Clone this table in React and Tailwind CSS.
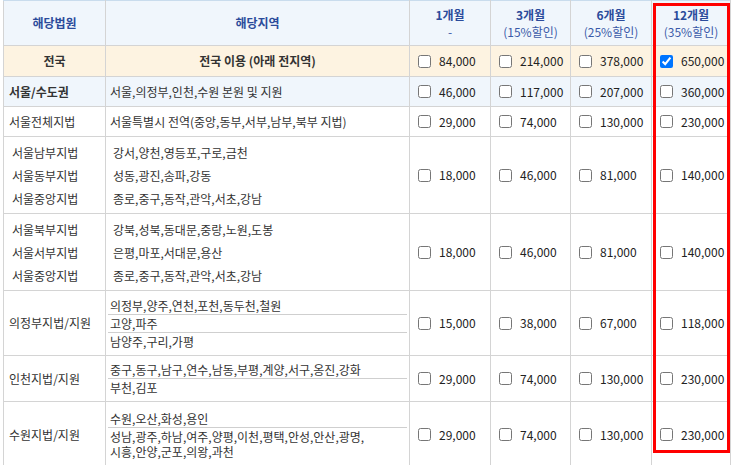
import React from "react";

const font = "font-['Noto_Sans_CJK_KR','Noto_Sans',sans-serif]";

const headers = [
  { top: "1개월", sub: "-" },
  { top: "3개월", sub: "(15%할인)" },
  { top: "6개월", sub: "(25%할인)" },
  { top: "12개월", sub: "(35%할인)" },
];

const rows = [
  {
    courts: ["전국"],
    regions: ["전국 이용 (아래 전지역)"],
    prices: ["84,000", "214,000", "378,000", "650,000"],
    bg: "bg-[#fdf3e1]",
    kind: "nation",
    h: "h-[31px]",
  },
  {
    courts: ["서울/수도권"],
    regions: ["서울,의정부,인천,수원 본원 및 지원"],
    prices: ["46,000", "117,000", "207,000", "360,000"],
    bg: "bg-[#f0f6fc]",
    kind: "bold",
    h: "h-[30px]",
  },
  {
    courts: ["서울전체지법"],
    regions: ["서울특별시 전역(중앙,동부,서부,남부,북부 지법)"],
    prices: ["29,000", "74,000", "130,000", "230,000"],
    h: "h-[30px]",
  },
  {
    courts: ["서울남부지법", "서울동부지법", "서울중앙지법"],
    regions: ["강서,양천,영등포,구로,금천", "성동,광진,송파,강동", "종로,중구,동작,관악,서초,강남"],
    prices: ["18,000", "46,000", "81,000", "140,000"],
    kind: "group",
    h: "h-[77px]",
  },
  {
    courts: ["서울북부지법", "서울서부지법", "서울중앙지법"],
    regions: ["강북,성북,동대문,중랑,노원,도봉", "은평,마포,서대문,용산", "종로,중구,동작,관악,서초,강남"],
    prices: ["18,000", "46,000", "81,000", "140,000"],
    kind: "group",
    h: "h-[77px]",
  },
  {
    courts: ["의정부지법/지원"],
    regions: ["의정부,양주,연천,포천,동두천,철원", "고양,파주", "남양주,구리,가평"],
    prices: ["15,000", "38,000", "67,000", "118,000"],
    kind: "split",
    h: "h-[65px]",
  },
  {
    courts: ["인천지법/지원"],
    regions: ["중구,동구,남구,연수,남동,부평,계양,서구,옹진,강화", "부천,김포"],
    prices: ["29,000", "74,000", "130,000", "230,000"],
    kind: "split",
    h: "h-[46px]",
  },
  {
    courts: ["수원지법/지원"],
    regions: ["수원,오산,화성,용인", "성남,광주,하남,여주,양평,이천,평택,안성,안산,광명,\n시흥,안양,군포,의왕,과천"],
    prices: ["29,000", "74,000", "130,000", "230,000"],
    kind: "split",
    h: "h-[66px]",
  },
];

function CourtCell({ row }) {
  if (row.kind === "nation") {
    return <div className="text-center font-bold">{row.courts[0]}</div>;
  }
  if (row.kind === "bold") {
    return <div className="pl-[5px] font-bold">{row.courts[0]}</div>;
  }
  if (row.kind === "group") {
    return (
      <div className="pl-[8px] leading-[23px]">
        {row.courts.map((c) => (
          <div key={c}>{c}</div>
        ))}
      </div>
    );
  }
  return <div className="pl-[5px]">{row.courts[0]}</div>;
}

function RegionCell({ row }) {
  if (row.kind === "nation") {
    return <div className="text-center font-bold">{row.regions[0]}</div>;
  }
  if (row.kind === "group") {
    return (
      <div className="pl-[7px] leading-[23px]">
        {row.regions.map((r) => (
          <div key={r}>{r}</div>
        ))}
      </div>
    );
  }
  if (row.kind === "split") {
    return (
      <div className="mx-[2px] flex flex-col">
        {row.regions.map((r, i) => (
          <div
            key={r}
            className={`px-[2px] leading-[15px] py-[1px] whitespace-pre-line ${
              i < row.regions.length - 1 ? "border-b border-[#cfcfcf]" : ""
            }`}
          >
            {r}
          </div>
        ))}
      </div>
    );
  }
  return <div className="pl-[4px]">{row.regions[0]}</div>;
}

export default function App() {
  return (
    <div className={`relative w-[731px] h-[465px] overflow-hidden bg-white ${font} text-[12px] text-[#333]`}>
      <table className="ml-[3px] table-fixed border-collapse w-[727px]">
        <colgroup>
          <col className="w-[102px]" />
          <col className="w-[304px]" />
          <col className="w-[81px]" />
          <col className="w-[80px]" />
          <col className="w-[81px]" />
          <col className="w-[79px]" />
        </colgroup>
        <thead>
          <tr className="h-[45px] bg-[#f0f6fc]">
            <th className="border border-[#d4d4d4] border-t-[#c9dced] font-bold text-[#2b4b9b]">해당법원</th>
            <th className="border border-[#d4d4d4] border-t-[#c9dced] font-bold text-[#2b4b9b]">해당지역</th>
            {headers.map((h) => (
              <th key={h.top} className="border border-[#d4d4d4] border-t-[#c9dced] text-[#2b4b9b] leading-[17px]">
                <div className="font-bold">{h.top}</div>
                <div className="font-normal text-[#3a5aa8]">{h.sub}</div>
              </th>
            ))}
          </tr>
        </thead>
        <tbody>
          {rows.map((row, idx) => (
            <tr key={idx} className={`${row.h} ${row.bg || "bg-white"}`}>
              <td className="border border-[#d4d4d4] p-0 align-middle">
                <CourtCell row={row} />
              </td>
              <td className="border border-[#d4d4d4] p-0 align-middle">
                <RegionCell row={row} />
              </td>
              {row.prices.map((p, i) => (
                <td key={i} className="border border-[#d4d4d4] p-0 align-middle">
                  <label className="flex items-center gap-[8px] pl-[8px]">
                    <input
                      type="checkbox"
                      defaultChecked={idx === 0 && i === 3}
                      className="m-0 w-[13px] h-[13px] shrink-0"
                    />
                    <span className="text-[#222]">{p}</span>
                  </label>
                </td>
              ))}
            </tr>
          ))}
        </tbody>
      </table>

      {/* highlight box over the 12-month column */}
      <div className="absolute left-[653px] top-[3px] w-[77px] h-[450px] border-[3px] border-[#ff0000] pointer-events-none" />
    </div>
  );
}
